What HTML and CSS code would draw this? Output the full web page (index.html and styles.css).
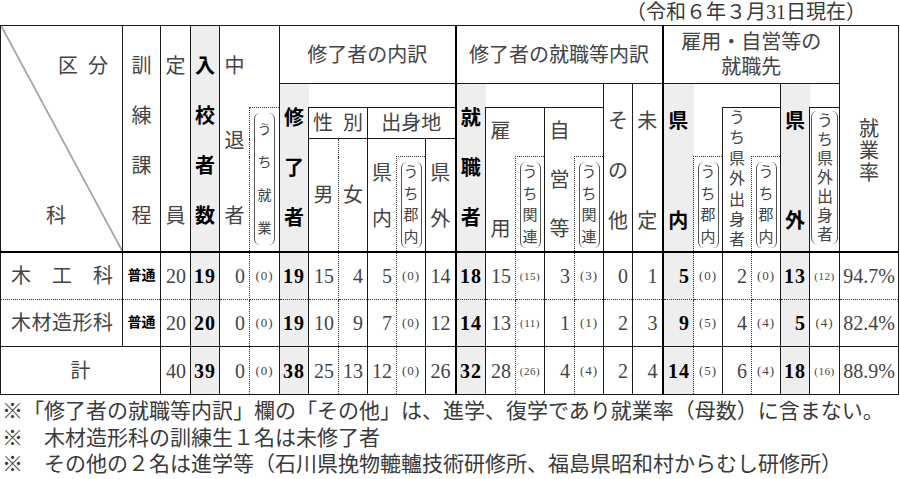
FILE: index.html
```html
<!DOCTYPE html>
<html lang="ja">
<head>
<meta charset="utf-8">
<title>修了者の就職状況</title>
<link rel="stylesheet" href="styles.css">
</head>
<body>
<div class="page">
  <p class="asof">（令和６年３月31日現在）</p>
  <table class="tbl">
    <colgroup>
      <col class="w122"><col class="w38"><col class="w30"><col class="w29"><col class="w30"><col class="w30">
      <col class="w29"><col class="w30"><col class="w29"><col class="w29"><col class="w29"><col class="w30">
      <col class="w30"><col class="w30"><col class="w29"><col class="w30"><col class="w29"><col class="w29"><col class="w30">
      <col class="w31"><col class="w29"><col class="w29"><col class="w29"><col class="w29"><col class="w30">
      <col class="w59">
    </colgroup>
    <thead>
      <tr class="ra">
        <td class="diag pt30" rowspan="5">
          <div class="diag-top">区&ensp;分</div>
          <div class="diag-bot">科</div>
        </td>
        <td rowspan="5" class="pt30"><div class="stk g30"><span>訓</span><span>練</span><span>課</span><span>程</span></div></td>
        <td rowspan="5" class="pt30"><div class="stk g130"><span>定</span><span>員</span></div></td>
        <td rowspan="5" class="pt30 sh b"><div class="stk g30"><span>入</span><span>校</span><span>者</span><span>数</span></div></td>
        <td rowspan="5" class="pt30 nr"><div class="stk g55"><span>中</span><span>退</span><span>者</span></div></td>
        <td rowspan="2" class="e"></td>
        <td colspan="6" class="grp">修了者の内訳</td>
        <td colspan="7" class="grp tk">修了者の就職等内訳</td>
        <td colspan="6" class="grp grp2 tk">雇用・自営等の<br>就職先</td>
        <td rowspan="5" class="pt93"><div class="stk g2"><span>就</span><span>業</span><span>率</span></div></td>
      </tr>
      <tr class="rb">
        <td rowspan="4" class="sh b nr pt24"><div class="stk g30"><span>修</span><span>了</span><span>者</span></div></td>
        <td colspan="5" class="e"></td>
        <td rowspan="4" class="sh b nr tk pt24"><div class="stk g30"><span>就</span><span>職</span><span>者</span></div></td>
        <td colspan="4" class="e"></td>
        <td rowspan="4" class="pt27"><div class="stk g30"><span>そ</span><span>の</span><span>他</span></div></td>
        <td rowspan="4" class="pt27"><div class="stk g80"><span>未</span><span>定</span></div></td>
        <td rowspan="4" class="sh b nr tk pt27"><div class="stk g80"><span>県</span><span>内</span></div></td>
        <td rowspan="3" class="e"></td>
        <td colspan="2" class="e"></td>
        <td rowspan="4" class="sh b nr pt27"><div class="stk g80"><span>県</span><span>外</span></div></td>
        <td class="e"></td>
      </tr>
      <tr class="rc">
        <td rowspan="3" class="dl dt pt5"><div class="bk bk-l">うち就業</div></td>
        <td colspan="2" class="mid">性&ensp;別</td>
        <td colspan="3" class="mid">出身地</td>
        <td rowspan="3" class="nr pt13"><div class="stk g78"><span>雇</span><span>用</span></div></td>
        <td rowspan="2" class="e st"></td>
        <td rowspan="3" class="nr pt13"><div class="stk g29"><span>自</span><span>営</span><span>等</span></div></td>
        <td rowspan="2" class="e st"></td>
        <td rowspan="3" class="nr"><div class="vt">うち県外出身者</div></td>
        <td rowspan="2" class="e st"></td>
        <td rowspan="3" class="pt3"><div class="bk bk-xl">うち県外出身者</div></td>
      </tr>
      <tr class="rd">
        <td rowspan="2" class="dr mid">男</td>
        <td rowspan="2" class="dl mid">女</td>
        <td rowspan="2" class="nr pt24"><div class="stk g26"><span>県</span><span>内</span></div></td>
        <td class="e"></td>
        <td rowspan="2" class="pt24"><div class="stk g26"><span>県</span><span>外</span></div></td>
      </tr>
      <tr class="re">
        <td class="dl dt pt5"><div class="bk">うち郡内</div></td>
        <td class="dl dt pt5"><div class="bk">うち関連</div></td>
        <td class="dl dt pt5"><div class="bk">うち関連</div></td>
        <td class="dl dt pt5"><div class="bk">うち郡内</div></td>
        <td class="dl dt pt5"><div class="bk">うち郡内</div></td>
      </tr>
    </thead>
    <tbody>
      <tr class="r1">
        <td class="lbl"><div class="spread"><span>木</span><span>工</span><span>科</span></div></td>
        <td class="kind">普通</td>
        <td class="n">20</td>
        <td class="n sh b">19</td>
        <td class="n dr">0</td>
        <td class="p dl">(0)</td>
        <td class="n sh b">19</td>
        <td class="n dr">15</td>
        <td class="n dl">4</td>
        <td class="n dr">5</td>
        <td class="p dl">(0)</td>
        <td class="n">14</td>
        <td class="n sh b tk">18</td>
        <td class="n dr">15</td>
        <td class="p pp dl">(15)</td>
        <td class="n dr">3</td>
        <td class="p dl">(3)</td>
        <td class="n">0</td>
        <td class="n">1</td>
        <td class="n sh b tk dr">5</td>
        <td class="p dl">(0)</td>
        <td class="n dr">2</td>
        <td class="p dl">(0)</td>
        <td class="n sh b">13</td>
        <td class="p pp">(12)</td>
        <td class="n rt">94.7%</td>
      </tr>
      <tr class="r2">
        <td class="lbl"><div class="spread"><span>木</span><span>材</span><span>造</span><span>形</span><span>科</span></div></td>
        <td class="kind">普通</td>
        <td class="n">20</td>
        <td class="n sh b">20</td>
        <td class="n dr">0</td>
        <td class="p dl">(0)</td>
        <td class="n sh b">19</td>
        <td class="n dr">10</td>
        <td class="n dl">9</td>
        <td class="n dr">7</td>
        <td class="p dl">(0)</td>
        <td class="n">12</td>
        <td class="n sh b tk">14</td>
        <td class="n dr">13</td>
        <td class="p pp dl">(11)</td>
        <td class="n dr">1</td>
        <td class="p dl">(1)</td>
        <td class="n">2</td>
        <td class="n">3</td>
        <td class="n sh b tk dr">9</td>
        <td class="p dl">(5)</td>
        <td class="n dr">4</td>
        <td class="p dl">(4)</td>
        <td class="n sh b">5</td>
        <td class="p">(4)</td>
        <td class="n rt">82.4%</td>
      </tr>
      <tr class="r3">
        <td colspan="2" class="total">計</td>
        <td class="n">40</td>
        <td class="n sh b">39</td>
        <td class="n dr">0</td>
        <td class="p dl">(0)</td>
        <td class="n sh b">38</td>
        <td class="n dr">25</td>
        <td class="n dl">13</td>
        <td class="n dr">12</td>
        <td class="p dl">(0)</td>
        <td class="n">26</td>
        <td class="n sh b tk">32</td>
        <td class="n dr">28</td>
        <td class="p pp dl">(26)</td>
        <td class="n dr">4</td>
        <td class="p dl">(4)</td>
        <td class="n">2</td>
        <td class="n">4</td>
        <td class="n sh b tk dr">14</td>
        <td class="p dl">(5)</td>
        <td class="n dr">6</td>
        <td class="p dl">(4)</td>
        <td class="n sh b">18</td>
        <td class="p pp">(16)</td>
        <td class="n rt">88.9%</td>
      </tr>
    </tbody>
  </table>
  <div class="notes">
    <p>※「修了者の就職等内訳」欄の「その他」は、進学、復学であり就業率（母数）に含まない。</p>
    <p>※　木材造形科の訓練生１名は未修了者</p>
    <p>※　その他の２名は進学等（石川県挽物轆轤技術研修所、福島県昭和村からむし研修所）</p>
  </div>
</div>
</body>
</html>
```

FILE: styles.css
```css
* { box-sizing: border-box; }
html, body { margin: 0; padding: 0; background: #fff; }
body {
  font-family: "Liberation Serif", "Noto Sans CJK JP", serif;
  color: #444;
}
.page { width: 900px; height: 479px; overflow: hidden; }

.asof {
  margin: 0;
  height: 25px;
  line-height: 25px;
  font-size: 20px;
  text-align: right;
  padding-right: 34px;
  color: #3a3a3a;
}

.tbl {
  border-collapse: collapse;
  table-layout: fixed;
  width: 898px;
  border: 1px solid #1a1a1a;
}
.w29 { width: 29px; } .w30 { width: 30px; } .w31 { width: 31px; }
.w38 { width: 38px; } .w59 { width: 59px; } .w122 { width: 122px; }

td {
  border: 1px solid #1a1a1a;
  padding: 0;
  text-align: center;
  font-size: 20px;
  line-height: 20px;
  color: #444;
}
thead td { vertical-align: top; }
tbody td { vertical-align: middle; }

.ra { height: 58px; }
.rb { height: 24px; }
.rc { height: 31px; }
.rd { height: 17px; }
.re { height: 95px; }
.r1 { height: 48px; }
.r2 { height: 47px; }
.r3 { height: 48px; }

/* border helpers */
.e { border: none; }
.st { border-top: 1px solid #1a1a1a; }
.nr { border-right: none; }
.dl { border-left: 1px dotted #333; }
.dr { border-right: 1px dotted #333; }
.dt { border-top: 1px dotted #333; }
.tk { border-left: 2px solid #000; }
.r1 td { border-top: 2px solid #000; border-bottom: 1px dotted #333; }
.r2 td { border-top: 1px dotted #333; }

.sh { background: #eeeeee; }
.b { font-weight: bold; color: #000; }
.mid { vertical-align: middle; }

.pt3 { padding-top: 3px; } .pt5 { padding-top: 5px; } .pt13 { padding-top: 13px; }
.pt24 { padding-top: 24px; } .pt27 { padding-top: 27px; } .pt30 { padding-top: 30px; }
.pt93 { padding-top: 93px; }

/* vertical character stacks */
.stk { display: flex; flex-direction: column; align-items: center; line-height: 20px; }
.g2 { gap: 2px; } .g26 { gap: 26px; } .g29 { gap: 29px; } .g30 { gap: 30px; }
.g55 { gap: 55px; } .g78 { gap: 78px; } .g80 { gap: 80px; } .g130 { gap: 130px; }

.vt {
  width: 17px;
  margin: 0 auto;
  font-size: 16px;
  line-height: 20.4px;
  word-break: break-all;
}

/* bracketed vertical labels */
.bk {
  width: 21px;
  margin: 0 auto;
  font-size: 15px;
  line-height: 21.5px;
  border-left: 1px solid #555;
  border-right: 1px solid #555;
  border-radius: 6px;
  word-break: break-all;
}
.bk-l { width: 21px; font-size: 14px; line-height: 33px; }
.bk-xl { width: 27px; font-size: 16px; line-height: 19px; padding: 0 5px; }

.grp { vertical-align: middle; }
.grp2 { line-height: 25px; }

/* diagonal corner */
.diag {
  background: linear-gradient(to top right, transparent calc(50% - 0.8px), #333 50%, transparent calc(50% + 0.8px));
}
.diag-top { text-align: right; padding-right: 14px; }
.diag-bot { text-align: left; padding-left: 45px; margin-top: 130px; }

/* body cells */
.lbl { padding: 0 9px 0 10px; }
.spread { display: flex; justify-content: space-between; font-size: 20px; }
.kind { font-size: 14px; font-weight: bold; color: #000; }
.total { font-size: 20px; }
.n { text-align: right; padding-right: 4px; font-size: 20px; }
.n.b { letter-spacing: 1px; padding-right: 3px; }
.rt { padding-right: 3px; }
.p { font-size: 13px; letter-spacing: 1px; }
.pp { font-size: 11px; letter-spacing: 0.5px; }

.notes { margin-top: 3px; padding-left: 2px; }
.notes p {
  margin: 0;
  font-size: 21px;
  line-height: 26.5px;
  white-space: nowrap;
  color: #3a3a3a;
}
```
